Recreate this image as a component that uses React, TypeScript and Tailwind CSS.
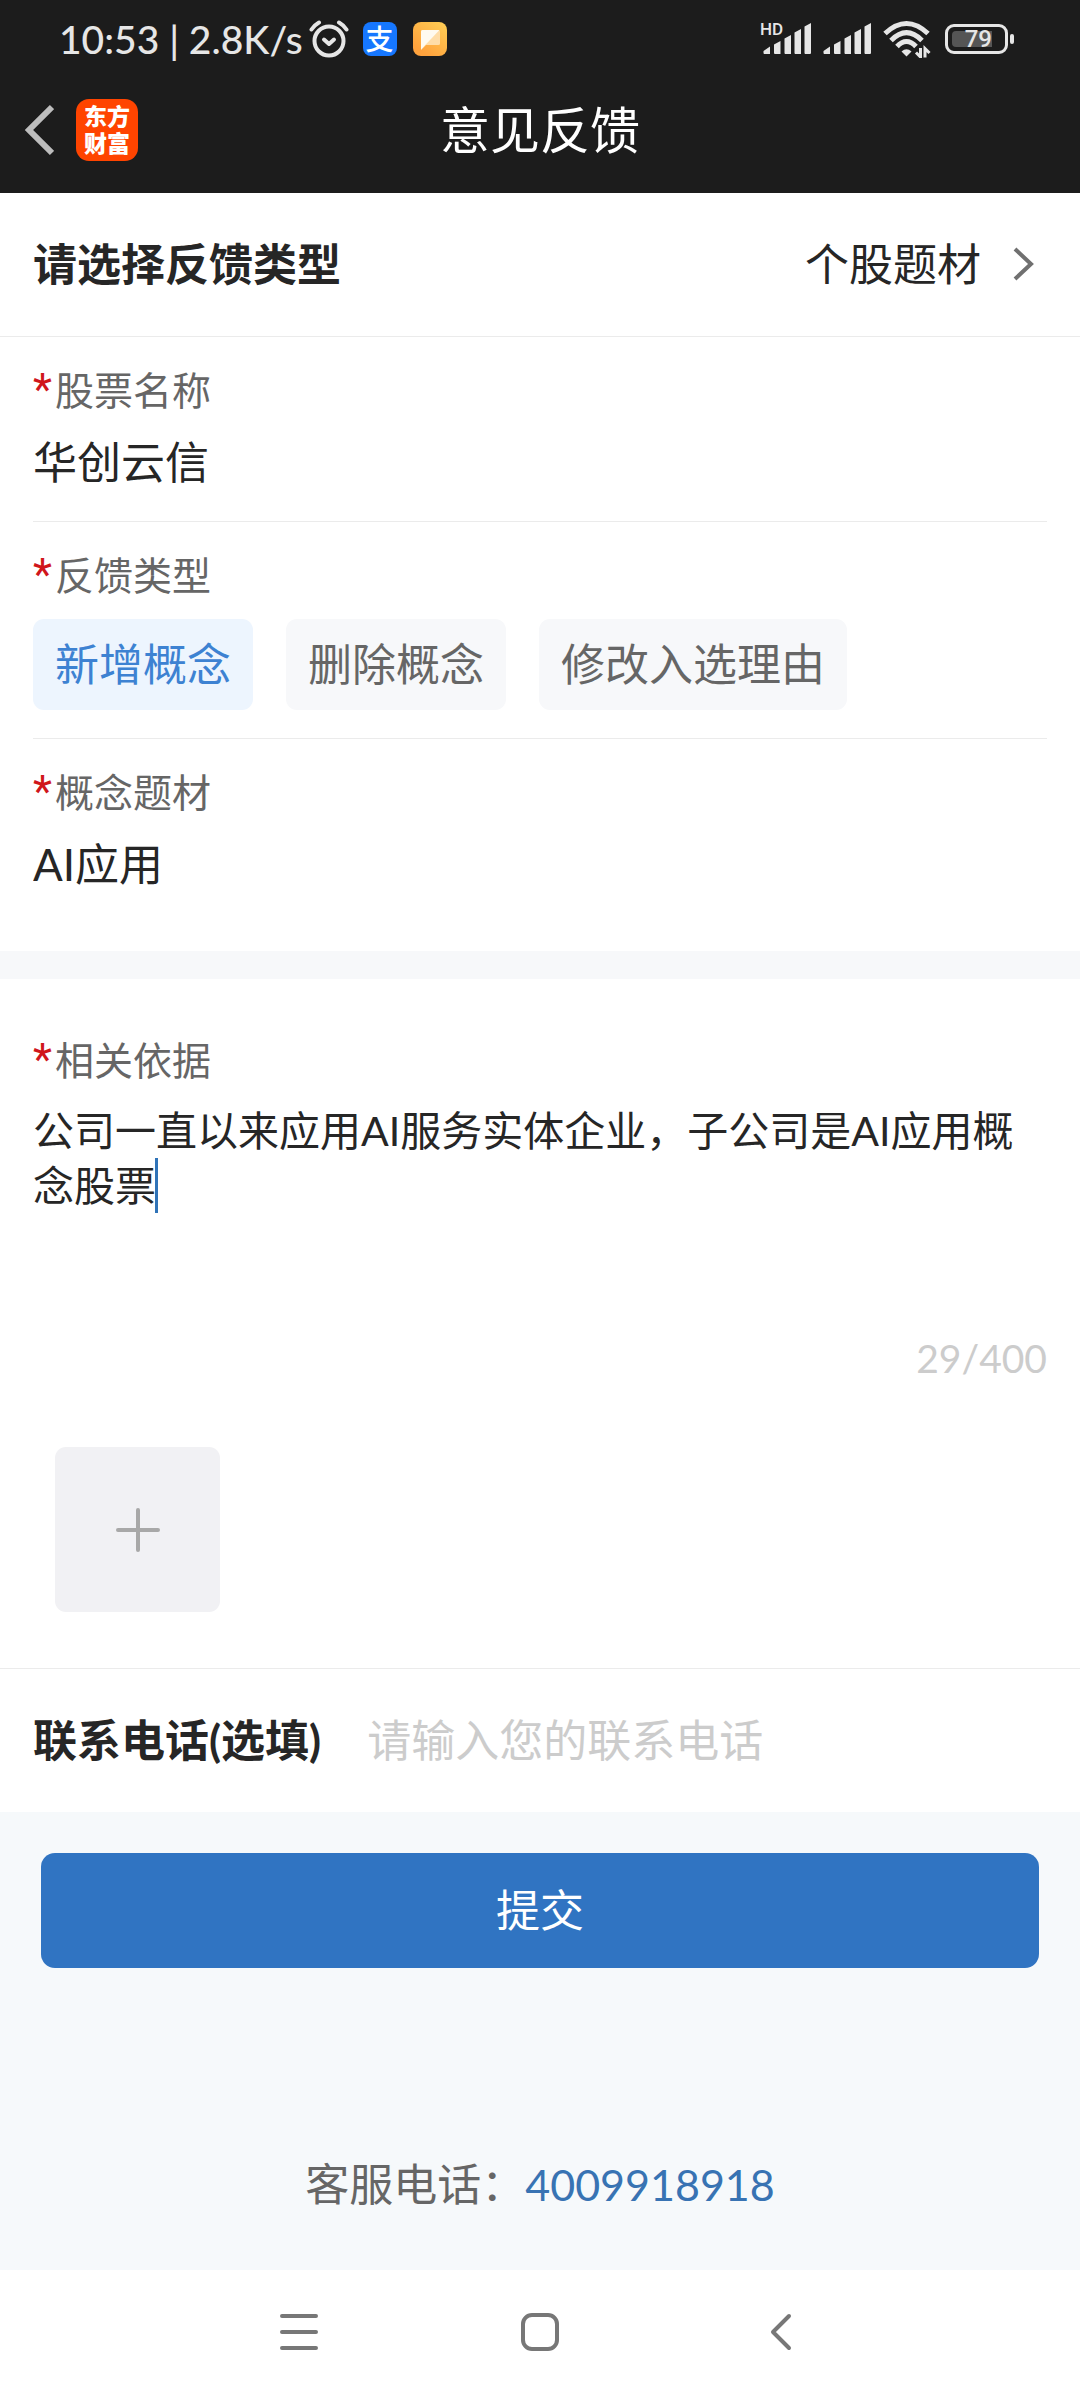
import { useState } from "react";

function Alarm() {
  return (
    <svg viewBox="0 0 40 38" className="w-10 h-[38px]" fill="none" stroke="#e6e6e6" strokeLinecap="round" strokeLinejoin="round">
      <circle cx="20" cy="21" r="14.500" strokeWidth="4" />
      <path d="M15 19.500 20 24 25 19.500" strokeWidth="4" />
      <path d="M2.500 9.500Q5.500 5 10 2.500M37.500 9.500Q34.500 5 30 2.500" strokeWidth="4" />
    </svg>
  );
}

function PayBadge() {
  return (
    <span className="flex h-[34px] w-[34px] items-center justify-center rounded-lg bg-[#1677ff] text-[28px] leading-none font-medium text-white">
      支
    </span>
  );
}

function NoteBadge() {
  return (
    <svg viewBox="0 0 34 34" className="h-[34px] w-[34px]">
      <defs>
        <linearGradient id="note" x1="1" y1="0" x2="0.3" y2="0.9">
          <stop offset="0" stopColor="#ffcf55" />
          <stop offset="1" stopColor="#ffa23d" />
        </linearGradient>
      </defs>
      <rect width="34" height="34" rx="8" fill="url(#note)" />
      <path d="M9.500 8H25.500Q27 8 27 9.500V21.500Q27 23 25.500 23H13L8 28V9.500Q8 8 9.500 8Z" fill="#ffdda8" />
      <path d="M9.500 8H26.500L8 27.500V9.500Q8 8 9.500 8Z" fill="#fffaf0" />
    </svg>
  );
}

function Bars() {
  return (
    <svg viewBox="0 0 48 32" className="h-8 w-12" fill="#e6e6e6">
      <path d="M0.500 28 7 23.500V31H1.500Q0.500 31 0.500 30ZM11 21.500 17.500 18V31H12Q11 31 11 30ZM21.500 15.500 28 12V31H22.500Q21.500 31 21.500 30ZM31.500 9.500 38 6V31H32.500Q31.500 31 31.500 30ZM41.500 3.500 48 0V30Q48 31 47 31H42.500Q41.500 31 41.500 30Z" />
    </svg>
  );
}

function Wifi() {
  return (
    <svg viewBox="0 0 48 38" className="h-[38px] w-12" fill="none" stroke="#e6e6e6">
      <path d="M2 13.500Q23.500-6.500 45 13.500" strokeWidth="5" />
      <path d="M8 20.500Q23.500 5 39 20.500" strokeWidth="5" />
      <path d="M14 26.500Q23.500 16.500 33 26.500" strokeWidth="5" />
      <path d="M18.500 31.500Q23.500 27 28.500 31.500L23.500 36.500Z" fill="#e6e6e6" stroke="none" />
      <path d="M37.500 28V37L33 32.500M42 37.500V28.500L46.500 33" strokeWidth="3" />
    </svg>
  );
}

function Battery() {
  return (
    <span className="flex items-center gap-[2px]">
      <span className="flex h-[30px] w-[63px] items-center rounded-[9px] border-[3px] border-[#e6e6e6] p-1">
        <span className="flex h-full w-10 items-center justify-end rounded-l-sm bg-[#555] font-[Roboto,sans-serif] text-[24px] leading-none font-medium text-[#e6e6e6]">
          79
        </span>
      </span>
      <span className="h-[10px] w-1 rounded-full bg-[#e6e6e6]" />
    </span>
  );
}

function Label({ text, htmlFor }: { text: string; htmlFor?: string }) {
  return (
    <label htmlFor={htmlFor} className="flex h-[50px] items-center text-[39px] leading-[50px] text-[#666]">
      <span className="w-[22px] font-[Roboto,sans-serif] text-[44px] text-[#d0161b]">*</span>
      {text}
    </label>
  );
}

const kinds = ["新增概念", "删除概念", "修改入选理由"];

export default function App() {
  const [kind, setKind] = useState(0);
  const [basis, setBasis] = useState("公司一直以来应用AI服务实体企业，子公司是AI应用概念股票");
  return (
    <div className="flex min-h-screen flex-col bg-white font-[Lato,'Noto_Sans_CJK_SC',sans-serif] text-[44px] leading-[64px] text-[#262626]">
      <header className="bg-[#1c1c1c] text-white">
        <div className="flex h-[78px] items-center justify-between pr-[66px] pl-[59px] text-[#e6e6e6]">
          <div className="flex items-center">
            <span className="text-[39px] leading-[48px] font-medium">10:53 | 2.8K/s</span>
            <span className="ml-[6px]"><Alarm /></span>
            <span className="ml-[14px]"><PayBadge /></span>
            <span className="ml-4"><NoteBadge /></span>
          </div>
          <div className="flex items-center">
            <span className="relative">
              <Bars />
              <span className="absolute -top-[3px] -left-[3px] font-[Roboto,sans-serif] text-[17px] leading-[18px] font-medium">HD</span>
            </span>
            <span className="ml-3"><Bars /></span>
            <span className="ml-3"><Wifi /></span>
            <span className="ml-[14px]"><Battery /></span>
          </div>
        </div>
        <div className="grid h-[115px] grid-cols-[1fr_auto_1fr] items-start pt-[21px]">
          <div className="flex items-center pl-6">
            <button aria-label="返回">
              <svg viewBox="0 0 30 52" className="h-[52px] w-[30px]" fill="none" stroke="#bdbdbd" strokeWidth="6">
                <path d="M28 3 5 26 28 49" />
              </svg>
            </button>
            <span className="ml-[22px] flex h-[62px] w-[62px] flex-col items-center justify-center rounded-[13px] bg-[#ff4400] text-[23px] leading-[27px] font-black">
              <span>东方</span>
              <span>财富</span>
            </span>
          </div>
          <h1 className="text-[50px] leading-[62px]">意见反馈</h1>
        </div>
      </header>

      <main className="flex flex-1 flex-col">
        <button className="flex h-[144px] items-center border-b border-[#ebebeb] pr-[45px] pb-[2px] pl-[33px]">
          <span className="flex-1 text-left font-bold">请选择反馈类型</span>
          <span>个股题材</span>
          <svg viewBox="0 0 22 34" className="ml-8 h-[34px] w-[22px]" fill="none" stroke="#707070" strokeWidth="4">
            <path d="M2 2 18 17 2 32" />
          </svg>
        </button>

        <div className="px-[33px]">
          <div className="border-b border-[#ebebeb] pt-7 pb-[27px]">
            <Label text="股票名称" htmlFor="stock" />
            <input id="stock" defaultValue="华创云信" className="mt-[15px] block h-16 w-full outline-none" />
          </div>
          <div className="border-b border-[#ebebeb] pt-7 pb-7">
            <Label text="反馈类型" />
            <div className="mt-[19px] flex gap-[33px]">
              {kinds.map((k, i) => (
                <button
                  key={k}
                  onClick={() => setKind(i)}
                  className={
                    i === kind
                      ? "h-[91px] rounded-[11px] bg-[#edf5fe] px-[22px] pb-[2px] text-[#3d82d2]"
                      : "h-[91px] rounded-[11px] bg-[#f7f8fa] px-[22px] pb-[2px] text-[#666]"
                  }
                >
                  {k}
                </button>
              ))}
            </div>
          </div>
          <div className="pt-7 pb-[55px]">
            <Label text="概念题材" htmlFor="topic" />
            <input id="topic" defaultValue="AI应用" className="mt-[15px] block h-16 w-full outline-none" />
          </div>
        </div>

        <div className="h-7 bg-[#f7f8fa]" />

        <div className="border-b border-[#ebebeb] px-[33px] pt-14 pb-14">
          <Label text="相关依据" htmlFor="basis" />
          <div className="relative mt-[18px]">
            <textarea
              id="basis"
              value={basis}
              onChange={(e) => setBasis(e.target.value)}
              className="block h-[223px] w-full resize-none text-[41px] leading-[55px] outline-none"
            />
            <span className="absolute top-[55px] left-[122px] h-[55px] w-[3px] bg-[#2f73b8]" />
          </div>
          <p className="text-right text-[39px] text-[#ccc]">{basis.length}/400</p>
          <button aria-label="添加图片" className="mt-[57px] ml-[22px] flex h-[165px] w-[165px] items-center justify-center rounded-[11px] bg-[#f1f1f4]">
            <svg viewBox="0 0 44 44" className="h-11 w-11" stroke="#a8a8a8" strokeWidth="4" strokeLinecap="round">
              <path d="M2 22H42M22 2V42" />
            </svg>
          </button>
        </div>

        <div className="flex h-[143px] items-center px-[33px] pb-[2px]">
          <label htmlFor="phone" className="font-bold">联系电话(选填)</label>
          <input id="phone" type="tel" placeholder="请输入您的联系电话" className="ml-[46px] h-16 min-w-0 flex-1 outline-none placeholder:text-[#ccc]" />
        </div>

        <div className="flex flex-1 flex-col bg-[#f6f9fb] px-[41px] pt-[41px] pb-[53px]">
          <button className="h-[115px] rounded-[14px] bg-[#3074c2] pb-[2px] text-white">提交</button>
          <p className="mt-auto text-center text-[#666]">
            客服电话：<a href="tel:4009918918" className="text-[43px] text-[#3873b3]">4009918918</a>
          </p>
        </div>
      </main>

      <nav className="flex h-[130px] items-center justify-center bg-white pb-[6px]">
        <button aria-label="最近任务">
          <svg viewBox="0 0 40 40" className="h-10 w-10" stroke="#777" strokeWidth="4" strokeLinecap="round">
            <path d="M3 4H37M3 20H37M3 36H37" />
          </svg>
        </button>
        <button aria-label="主屏幕" className="mx-[201px]">
          <svg viewBox="0 0 40 40" className="h-10 w-10" fill="none" stroke="#777" strokeWidth="4">
            <rect x="3" y="3" width="34" height="34" rx="9" />
          </svg>
        </button>
        <button aria-label="后退">
          <svg viewBox="0 0 40 40" className="h-10 w-10" fill="none" stroke="#777" strokeWidth="4" strokeLinecap="round" strokeLinejoin="round">
            <path d="M28 4 12 20 28 36" />
          </svg>
        </button>
      </nav>
    </div>
  );
}
